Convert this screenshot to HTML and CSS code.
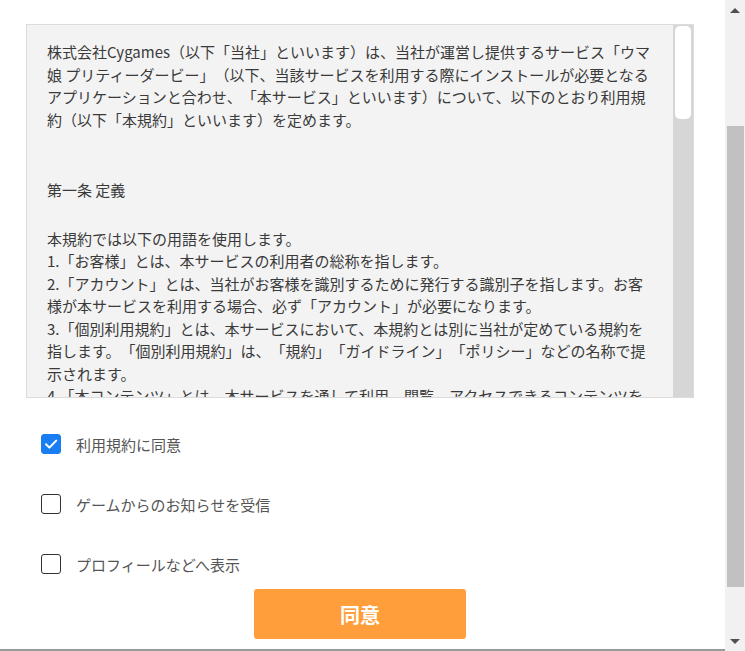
FILE: index.html
```html
<!DOCTYPE html>
<html lang="ja">
<head>
<meta charset="utf-8">
<title>利用規約</title>
<link rel="stylesheet" href="styles.css">
</head>
<body>
<div class="page">
  <main class="main">
    <section class="terms">
      <div class="terms-text">
        <p class="intro">株式会社Cygames（以下「当社」といいます）は、当社が運営し提供するサービス「ウマ娘 プリティーダービー」（以下、当該サービスを利用する際にインストールが必要となるアプリケーションと合わせ、「本サービス」といいます）について、以下のとおり利用規約（以下「本規約」といいます）を定めます。</p>
        <p class="article">第一条 定義</p>
        <p class="body">本規約では以下の用語を使用します。<br>1.「お客様」とは、本サービスの利用者の総称を指します。<br>2.「アカウント」とは、当社がお客様を識別するために発行する識別子を指します。お客様が本サービスを利用する場合、必ず「アカウント」が必要になります。<br>3.「個別利用規約」とは、本サービスにおいて、本規約とは別に当社が定めている規約を指します。「個別利用規約」は、「規約」「ガイドライン」「ポリシー」などの名称で提示されます。<br>4.「本コンテンツ」とは、本サービスを通して利用、閲覧、アクセスできるコンテンツを指します。</p>
      </div>
      <div class="terms-bar"><div class="terms-thumb"></div></div>
    </section>
    <div class="options">
      <label class="option">
        <span class="box checked"><svg viewBox="0 0 20 20" width="20" height="20"><path d="M5 10.2l3.4 3.4L15.2 6.6" fill="none" stroke="#fff" stroke-width="2" stroke-linecap="round" stroke-linejoin="round"/></svg></span>
        <span class="option-text">利用規約に同意</span>
      </label>
      <label class="option">
        <span class="box"></span>
        <span class="option-text">ゲームからのお知らせを受信</span>
      </label>
      <label class="option">
        <span class="box"></span>
        <span class="option-text">プロフィールなどへ表示</span>
      </label>
    </div>
    <div class="actions">
      <button class="agree" type="button">同意</button>
    </div>
    <div class="below"></div>
  </main>
  <aside class="vscroll">
    <div class="arrow up"></div>
    <div class="track"><div class="thumb"></div></div>
    <div class="arrow down"></div>
  </aside>
</div>
</body>
</html>
```

FILE: styles.css
```css
* { box-sizing: border-box; }
html, body { margin: 0; padding: 0; background: #fff; }
body {
  font-family: "Noto Sans CJK JP", "Noto Sans", sans-serif;
  color: #333;
  text-spacing-trim: space-all;
}
.page {
  display: flex;
  width: 745px;
  height: 651px;
  overflow: hidden;
}
.main {
  flex: 1;
  display: flex;
  flex-direction: column;
  padding: 24px 0 0 26px;
}
.main > * { flex-shrink: 0; }
.terms {
  width: 668px;
  height: 374px;
  border: 1px solid #dcdcdc;
  background: #f3f3f3;
  display: flex;
  overflow: hidden;
}
.terms-text {
  flex: 1;
  overflow: hidden;
  padding: 16px 18px 0 20px;
  font-size: 15px;
  line-height: 1.5;
  color: #3a3a3a;
}
.terms-text p { margin: 0; }
.intro { margin-bottom: 48px !important; }
.article { margin-bottom: 26px !important; }
.terms-bar {
  width: 20px;
  flex-shrink: 0;
  background: #d6d6d6;
  padding: 1px 2px;
}
.terms-thumb {
  height: 93px;
  background: #fff;
  border-radius: 5px;
}
.options {
  display: flex;
  flex-direction: column;
  gap: 40px;
  padding: 36px 0 0 15px;
}
.option {
  display: flex;
  align-items: center;
  gap: 15px;
  height: 20px;
  font-size: 15px;
  color: #555;
}
.box {
  width: 20px;
  height: 20px;
  flex-shrink: 0;
  border: 1px solid #333;
  border-radius: 3px;
  background: #fff;
  display: flex;
}
.box.checked {
  border-color: #1a7ef2;
  background: #1a7ef2;
}
.box svg { margin: -1px; }
.actions {
  width: 668px;
  display: flex;
  justify-content: center;
  padding-top: 15px;
}
.agree {
  width: 212px;
  height: 50px;
  border: 0;
  border-radius: 3px;
  background: #ff9e3b;
  color: #fff;
  font-family: "Noto Sans CJK JP", sans-serif;
  font-size: 20px;
  font-weight: 700;
}
.below {
  margin-top: 10px;
  margin-left: -26px;
  border-top: 2px solid #9a9a9a;
  height: 10px;
}
.vscroll {
  width: 20px;
  flex-shrink: 0;
  background: #f1f1f1;
  display: flex;
  flex-direction: column;
}
.arrow {
  height: 20px;
  flex-shrink: 0;
  display: flex;
  align-items: center;
  justify-content: center;
}
.arrow::before {
  content: "";
  border-left: 5px solid transparent;
  border-right: 5px solid transparent;
}
.arrow.up::before { border-bottom: 5px solid #505050; }
.arrow.down::before { border-top: 5px solid #505050; }
.track {
  flex: 1;
  padding: 106px 1px 0 2px;
}
.thumb {
  height: 461px;
  background: #c1c1c1;
}
```
